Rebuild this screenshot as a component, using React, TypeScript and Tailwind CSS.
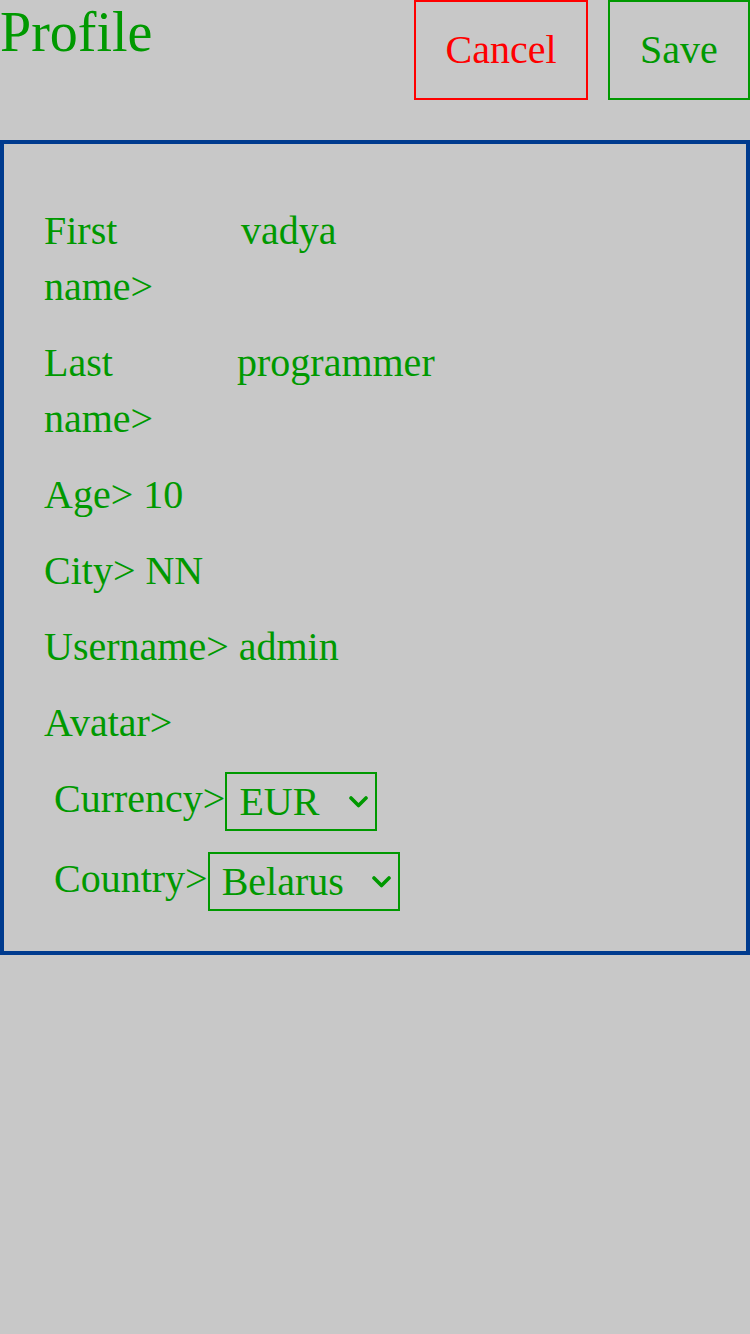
import React from "react";

const Chevron = () => (
  <svg width="19" height="12" viewBox="0 0 19 12" className="shrink-0">
    <polyline points="2,2 9.5,9.5 17,2" fill="none" stroke="#009900" strokeWidth="3.6" strokeLinecap="round" strokeLinejoin="round" />
  </svg>
);

export default function App() {
  return (
    <div className="min-h-[1334px] w-[750px] bg-[#c8c8c8] text-[#009900] font-['Liberation_Serif',serif]">
      <div className="flex items-start justify-between h-[100px]">
        <div className="text-[56px] leading-[1.15]">Profile</div>
        <div className="flex gap-[20px]">
          <button className="w-[174px] h-[100px] border-2 border-[#ff0000] text-[#ff0000] text-[40px] flex items-center justify-center">
            Cancel
          </button>
          <button className="w-[142px] h-[100px] border-2 border-[#009900] text-[#009900] text-[40px] flex items-center justify-center">
            Save
          </button>
        </div>
      </div>
      <div className="mt-[40px] border-4 border-[#003b8e] pl-[40px] pt-[59px] pb-[40px] text-[40px] leading-[56px] flex flex-col gap-[20px]">
        <div className="flex items-start">
          <span className="w-[183px]">First name&gt;</span>
          <span className="ml-[14px]">vadya</span>
        </div>
        <div className="flex items-start">
          <span className="w-[183px]">Last name&gt;</span>
          <span className="ml-[10px]">programmer</span>
        </div>
        <div>Age&gt; 10</div>
        <div>City&gt; NN</div>
        <div>Username&gt; admin</div>
        <div>Avatar&gt;</div>
        <div className="flex items-start ml-[10px]">
          <span>Currency&gt;</span>
          <div className="mt-[1px] w-[152px] h-[59px] border-2 border-[#009900] pl-[12px] pr-[7px] flex items-center justify-between">
            <span className="leading-[56px] mt-[1px]">EUR</span>
            <Chevron />
          </div>
        </div>
        <div className="flex items-start ml-[10px]">
          <span>Country&gt;</span>
          <div className="mt-[1px] w-[192px] h-[59px] border-2 border-[#009900] pl-[12px] pr-[7px] flex items-center justify-between">
            <span className="leading-[56px] mt-[1px]">Belarus</span>
            <Chevron />
          </div>
        </div>
      </div>
    </div>
  );
}
